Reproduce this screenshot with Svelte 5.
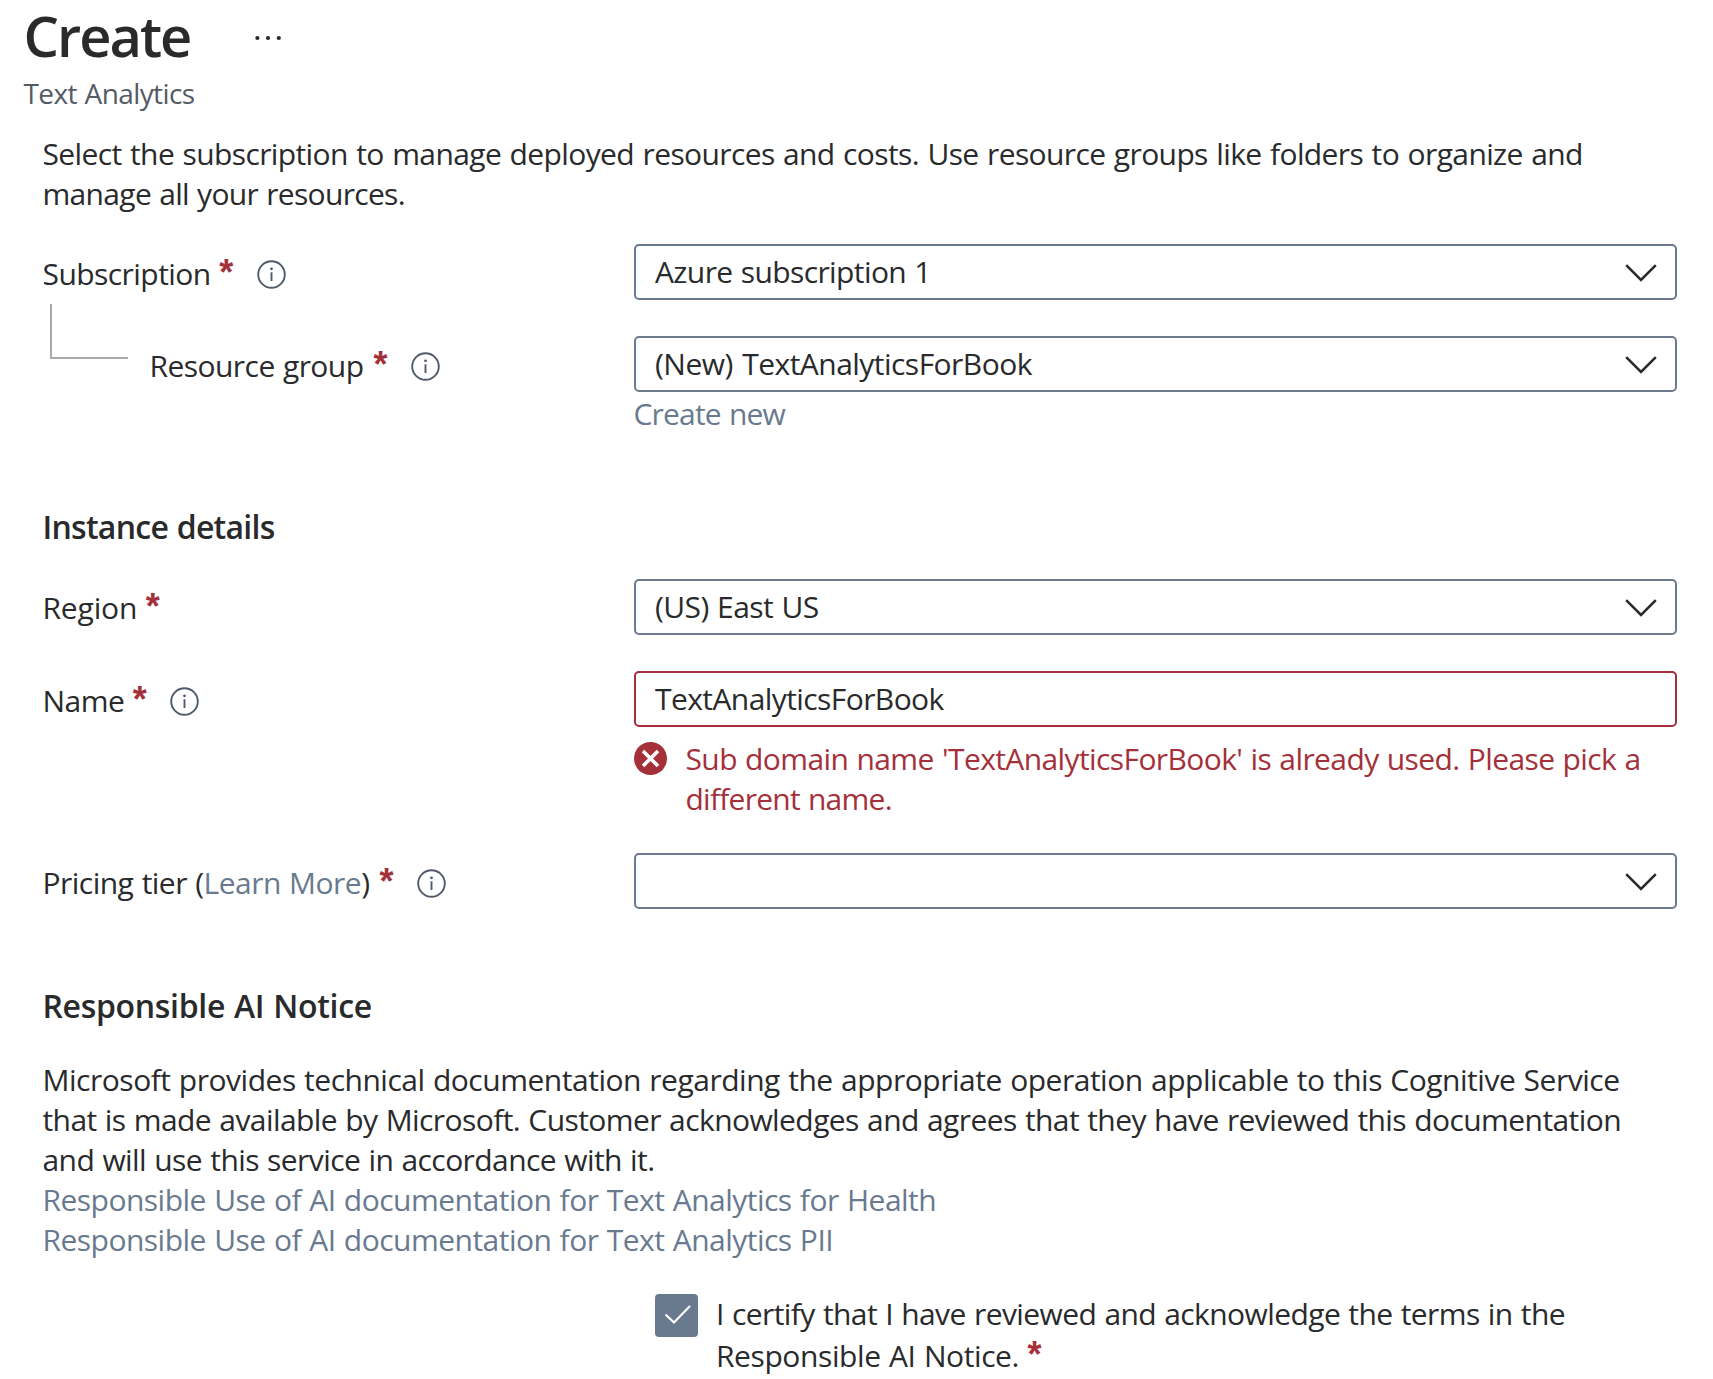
<script>
  let certified = $state(true);
  const docs = [
    'Responsible Use of AI documentation for Text Analytics for Health',
    'Responsible Use of AI documentation for Text Analytics PII'
  ];
</script>

{#snippet star()}<span class="star">*</span>{/snippet}

{#snippet info()}
  <svg class="info" viewBox="0 0 29 29" aria-label="More information">
    <circle cx="14.5" cy="14.5" r="13.3" />
    <path d="M14.5 12.3V21" />
    <circle class="dot" cx="14.5" cy="8.8" r="1.4" />
  </svg>
{/snippet}

{#snippet chevron()}
  <svg class="chevron" viewBox="0 0 32 18"><path d="M1.2 1.2L16 16L30.8 1.2" /></svg>
{/snippet}

<main>
  <header>
    <div class="title">
      <h1>Create</h1>
      <svg class="more" viewBox="0 0 26 6">
        <circle cx="2.4" cy="3" r="2.1" /><circle cx="13" cy="3" r="2.1" /><circle cx="23.8" cy="3" r="2.1" />
      </svg>
    </div>
    <p class="subtitle">Text Analytics</p>
  </header>

  <p class="intro">
    <span class="line l1">Select the subscription to manage deployed resources and costs. Use resource groups like folders to organize and</span>
    <span class="line l2">manage all your resources.</span>
  </p>

  <div class="row first">
    <div class="label"><span class="t-sub">Subscription</span>{@render star()}{@render info()}</div>
    <div class="field"><span class="v-sub">Azure subscription 1</span>{@render chevron()}</div>
  </div>

  <div class="row second">
    <div class="label"><i class="branch"></i><span class="t-rg">Resource group</span>{@render star()}{@render info()}</div>
    <div class="field"><span class="v-rg">(New) TextAnalyticsForBook</span>{@render chevron()}</div>
  </div>
  <a class="create-new">Create new</a>

  <h2 class="instance">Instance details</h2>

  <div class="row region">
    <div class="label"><span class="t-reg">Region</span>{@render star()}</div>
    <div class="field"><span class="v-reg">(US) East US</span>{@render chevron()}</div>
  </div>

  <div class="row name">
    <div class="label"><span class="t-name">Name</span>{@render star()}{@render info()}</div>
    <div class="field invalid"><span class="v-name">TextAnalyticsForBook</span></div>
  </div>
  <div class="error">
    <svg class="error-icon" viewBox="0 0 33 33"><circle cx="16.5" cy="16.5" r="16.5" /><path d="M9 9L24 24M24 9L9 24" /></svg>
    <p>
      <span class="line e1">Sub domain name 'TextAnalyticsForBook' is already used. Please pick a</span>
      <span class="line e2">different name.</span>
    </p>
  </div>

  <div class="row pricing">
    <div class="label"><span class="t-price">Pricing tier (<a>Learn More</a>)</span>{@render star()}{@render info()}</div>
    <div class="field"><span></span>{@render chevron()}</div>
  </div>

  <h2 class="notice">Responsible AI Notice</h2>
  <div class="legal">
    <span class="line n1">Microsoft provides technical documentation regarding the appropriate operation applicable to this Cognitive Service</span>
    <span class="line n2">that is made available by Microsoft. Customer acknowledges and agrees that they have reviewed this documentation</span>
    <span class="line n3">and will use this service in accordance with it.</span>
    {#each docs as doc}
      <a class="line doc">{doc}</a>
    {/each}
  </div>

  <div class="certify">
    <button class="check" aria-label="Certify" onclick={() => (certified = !certified)}>
      {#if certified}<svg viewBox="0 0 43 43"><path d="M10.5 20.5L19 28.5L35 12" /></svg>{/if}
    </button>
    <p>
      <span class="line c1">I certify that I have reviewed and acknowledge the terms in the</span>
      <span class="line c2"><span class="c2t">Responsible AI Notice.</span>{@render star()}</span>
    </p>
  </div>
</main>

<style>
  :global(body) { background: #fff; }
  main {
    width: 1713px;
    height: 1379px;
    box-sizing: border-box;
    padding: 1px 36px 0 42.5px;
    background: #fff;
    color: #292a2c;
    font: 400 30px/40px "Open Sans", "Noto Sans", sans-serif;
    letter-spacing: -0.55px;
    word-spacing: 1px;
    white-space: nowrap;
  }
  h1, h2, p { margin: 0; }
  a { color: #697a8f; }
  span { flex: none; }
  header { margin-left: -19px; }
  .title { display: flex; align-items: center; height: 68px; }
  h1 { width: 231px; font-size: 56px; font-weight: 600; line-height: 68px; letter-spacing: -2px; }
  .more { width: 26px; height: 6px; margin-top: 6px; fill: #292a2c; }
  .subtitle { color: #555b65; font-size: 28px; line-height: 48px; letter-spacing: -0.6px; }
  .line { display: block; width: max-content; }
  .intro { margin-top: 17px; }
  .l1 { letter-spacing: -0.62px; word-spacing: 1.3px; }
  .l2 { letter-spacing: -0.68px; }
  .row { display: flex; height: 56px; }
  .label { display: flex; width: 591px; line-height: 59px; }
  .field {
    display: flex;
    flex: 1;
    justify-content: space-between;
    box-sizing: border-box;
    border: 2px solid #6b7a8f;
    border-radius: 5px;
    padding: 0 18px 0 19.5px;
    line-height: 52px;
  }
  .invalid { border-color: #a4303a; }
  .first { margin-top: 30px; }
  .second { margin-top: 36px; }
  .region { margin-top: 32px; }
  .region .label { line-height: 58px; }
  .name { margin-top: 36px; }
  .pricing { margin-top: 35px; }
  .t-rg, .t-price { margin-right: 1.5px; }
  .t-price { letter-spacing: -0.52px; }
  .t-reg { letter-spacing: -0.15px; }
  .v-sub { letter-spacing: -0.6px; }
  .v-rg { letter-spacing: -0.53px; word-spacing: 2.2px; }
  .v-name { letter-spacing: -0.58px; }
  .branch {
    width: 76px;
    height: 53px;
    margin: -32px 21.5px 0 7.5px;
    border: solid #aaa8a9;
    border-width: 0 0 2px 2px;
  }
  .star {
    width: 15px;
    margin: -1px 0 0 8.5px;
    color: #a4303a;
    font-family: "Liberation Sans", Arial, sans-serif;
    font-size: 36px;
    font-weight: 700;
    letter-spacing: 0;
  }
  .info { width: 29px; height: 29px; margin: 15.5px 0 0 22.5px; fill: none; stroke: #4f5a6b; stroke-width: 1.9; }
  .info .dot { fill: #4f5a6b; stroke: none; }
  .chevron { width: 32px; height: 18px; margin-top: 18px; fill: none; stroke: #292a2c; stroke-width: 2.6; }
  .create-new { display: block; width: max-content; margin-left: 591px; line-height: 44px; letter-spacing: -0.8px; }
  h2 { width: max-content; font-size: 32px; font-weight: 600; line-height: 40px; }
  .instance { margin-top: 71px; letter-spacing: -0.74px; }
  .notice { margin-top: 77px; letter-spacing: -0.32px; }
  .error { display: flex; margin: 12px 0 0 591px; color: #a4303a; }
  .error-icon { width: 33px; height: 33px; margin: 3px 19px 0 0; fill: #a4303a; }
  .error-icon path { stroke: #fff; stroke-width: 3.6; }
  .e1 { letter-spacing: -0.6px; }
  .e2 { letter-spacing: -0.75px; }
  .error + .pricing { margin-top: 34px; }
  .legal { margin-top: 34px; line-height: 40.1px; }
  .n1 { letter-spacing: -0.48px; }
  .n2, .n3 { letter-spacing: -0.58px; }
  .doc { letter-spacing: -0.52px; }
  .certify { display: flex; margin: 32.5px 0 0 612px; line-height: 42px; }
  .check { width: 43px; height: 43px; margin: 1px 18.5px 0 0; padding: 0; border: 0; border-radius: 4px; background: #697a8f; }
  .check svg { display: block; fill: none; stroke: #fff; stroke-width: 2.2; }
  .c1 { letter-spacing: -0.59px; }
  .c2 { display: flex; }
  .c2t { letter-spacing: -0.41px; }
</style>
